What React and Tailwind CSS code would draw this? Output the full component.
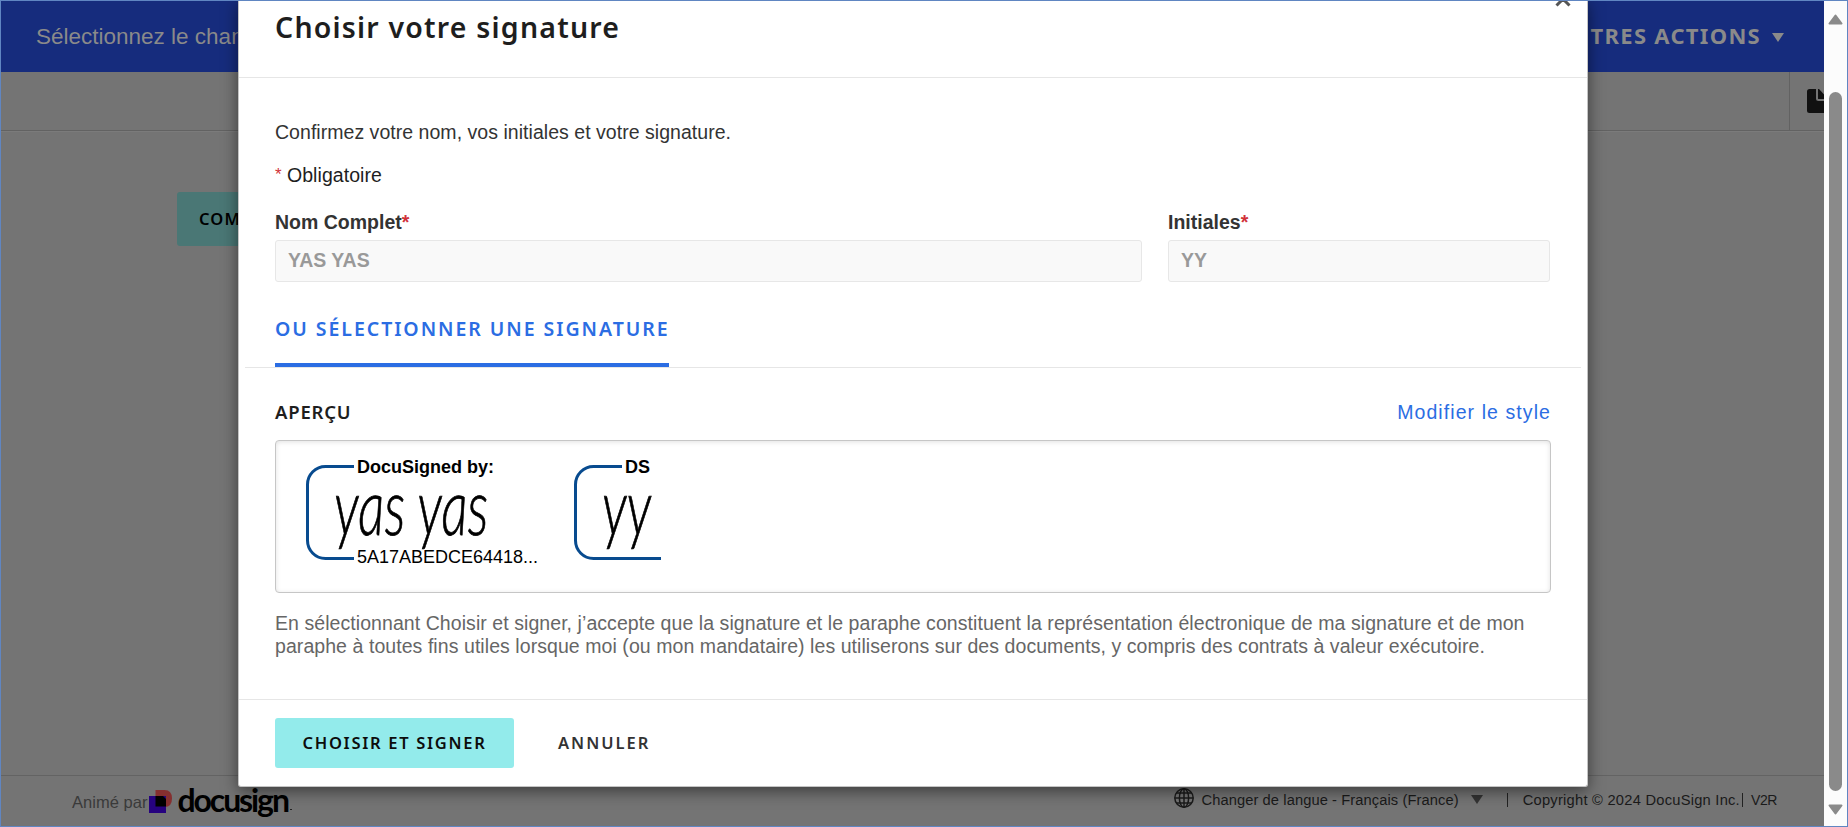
import React from "react";

const heading = "font-['Noto_Sans',sans-serif]";
const signature =
  "inline-block origin-left scale-x-[0.68] skew-x-2 whitespace-pre font-['Lato',sans-serif] text-[78px] leading-[80px] font-light italic text-black [-webkit-text-stroke:0.8px_black]";

function Caret({ className }) {
  return (
    <svg viewBox="0 0 12 9" className={className}>
      <path d="M0 0H12L6 9Z" fill="currentColor" />
    </svg>
  );
}

function PageHeader() {
  return (
    <header className="flex h-[71px] shrink-0 items-center justify-between bg-[#162c7d] pr-10 pb-px pl-[35px] text-[#8a8a8a]">
      <span className="mt-[2px] text-[22.5px] leading-[30px] whitespace-nowrap">Sélectionnez le champ</span>
      <div className="flex items-center gap-[11px]">
        <span className={`${heading} -mt-[2px] text-[22px] leading-[30px] font-bold tracking-[1.3px] whitespace-nowrap`}>
          AUTRES ACTIONS
        </span>
        <Caret className="mt-[3px] h-[9px] w-3" />
      </div>
    </header>
  );
}

function Toolbar() {
  return (
    <div className="flex h-[59px] shrink-0 justify-end border-b border-[#626262]">
      <div className="flex w-[35px] overflow-hidden border-l border-[#626262] pt-[17px] pl-[17px]">
        <svg viewBox="0 0 24 24" className="h-6 w-6 shrink-0">
          <rect width="24" height="24" rx="2.5" fill="#111" />
          <path d="M10 0V9.500Q10 11 11.500 11H24" fill="none" stroke="#747474" strokeWidth="2" />
          <path d="M12 0H24V10L21 10Z" fill="#747474" />
          <path d="M12.200 2V8.500H18.700Z" fill="#111" />
        </svg>
      </div>
    </div>
  );
}

function DocusignLogo() {
  return (
    <div className="flex items-center">
      <svg viewBox="0 0 23 23" className="mr-[5px] h-[23px] w-[23px]">
        <path d="M6.500 0H15.500Q23 0 23 8.500T15.500 17H6.500Z" fill="#852f2f" />
        <rect y="6" width="17" height="17" fill="#26027f" />
        <path d="M6.500 6H14L17 9V16.500H6.500Z" fill="#000" />
      </svg>
      <span className="-mt-[3px] font-['Lato',sans-serif] text-[32px] leading-[36px] font-bold tracking-[-2.1px] text-black">
        docusign
      </span>
      <span className="mt-4 ml-[2px] h-px w-[2px] bg-[#222]" />
    </div>
  );
}

function Globe() {
  return (
    <svg viewBox="0 0 20 20" className="h-5 w-5" fill="none" stroke="#1b1b1b" strokeWidth="1.5">
      <circle cx="10" cy="10" r="9.200" />
      <ellipse cx="10" cy="10" rx="4.600" ry="9.200" />
      <path d="M10 .8V19.200M.8 10H19.200M2.400 5H17.600M2.400 15H17.600" />
    </svg>
  );
}

function PageFooter() {
  return (
    <footer className="flex h-[51px] shrink-0 justify-between border-t border-[#636363] pr-[47px] pl-[71px] text-[#1a1a1a]">
      <div className="flex items-center">
        <span className="mt-[2px] mr-[2px] text-[16.5px] leading-5 tracking-[0.03px] text-[#3a3a3a]">Animé par</span>
        <DocusignLogo />
      </div>
      <div className="flex h-[44px] items-center text-[14.7px] leading-5 whitespace-nowrap">
        <Globe />
        <span className="mt-[3px] ml-[7px] tracking-[0.09px]">Changer de langue - Français (France)</span>
        <Caret className="mt-[3px] ml-[12px] h-[9px] w-3 text-[#333]" />
        <span className="mt-[4px] ml-[24px] h-[14px] w-px bg-[#222]" />
        <span className="mt-[3px] ml-[15px] tracking-[0.24px]">Copyright © 2024 DocuSign Inc.</span>
        <span className="mt-[4px] ml-[2px] h-[14px] w-px bg-[#222]" />
        <span className="mt-[3px] ml-[8px] text-[14px] tracking-[-0.4px]">V2R</span>
      </div>
    </footer>
  );
}

function Field({ label, value, width }) {
  return (
    <div className={`flex flex-col gap-[7px] ${width}`}>
      <label className="text-[19.5px] leading-[22px] font-bold text-[#333]">
        {label}
        <span className="text-[#d13239]">*</span>
      </label>
      <div className="flex h-[42px] items-center rounded-[3px] border border-[#e7e7e7] bg-[#f9f9f9] px-3 text-[19.5px] font-bold text-[#999]">
        {value}
      </div>
    </div>
  );
}

function Stamp({ bracket, width, title, text, code }) {
  return (
    <div className={`relative h-[110px] ${width}`}>
      <svg viewBox="0 0 96 96" className="absolute top-[7px] left-0 h-24 w-24" fill="none" stroke="#084b8f" strokeWidth="3">
        <path d={bracket} />
      </svg>
      <span className="absolute -top-px left-[51px] text-[18px] leading-5 font-bold whitespace-nowrap text-black">{title}</span>
      <span className="absolute top-[7px] left-[28px]">
        <span className={signature}>{text}</span>
      </span>
      <span className="absolute top-[89px] left-[51px] text-[18px] leading-5 whitespace-nowrap text-black">{code}</span>
    </div>
  );
}

function SignatureDialog() {
  return (
    <section className="absolute -top-px left-[237px] flex h-[787px] w-[1350px] flex-col rounded-b-[3px] border-x border-b border-[#c4c4c4] bg-white shadow-[0_4px_16px_rgba(0,0,0,0.5)]">
      <div className="relative h-[78px] shrink-0 overflow-hidden border-b border-[#e6e6e6] px-9 pt-[7px]">
        <h1 className={`${heading} text-[28.5px] leading-10 font-semibold tracking-[1.2px] text-[#1e1e1e]`}>
          Choisir votre signature
        </h1>
        <svg viewBox="0 0 16 16" className="absolute -top-[9px] right-4 h-4 w-4">
          <path d="M1.500 1.500L14.500 14.500M14.500 1.500L1.500 14.500" stroke="#555" strokeWidth="3" />
        </svg>
      </div>

      <div className="flex flex-col px-9">
        <p className="mt-[43px] text-[19.5px] leading-[22px] tracking-[0.035px] text-[#333]">
          Confirmez votre nom, vos initiales et votre signature.
        </p>
        <p className="mt-[21px] flex h-[22px] text-[19.5px] leading-[22px] text-[#1e1e1e]">
          <span className="w-3 text-[17px] text-[#d13239]">*</span>
          <span className="tracking-[0.05px]">Obligatoire</span>
        </p>
        <div className="mt-[25px] flex gap-[26px]">
          <Field label="Nom Complet" value="YAS YAS" width="w-[867px]" />
          <Field label="Initiales" value="YY" width="w-[382px]" />
        </div>
      </div>

      <div className="mx-1.5 mt-[35px] flex border-b border-[#e6e6e6] pl-[30px]">
        <div className={`${heading} w-[394px] border-b-4 border-[#2b6de3] pb-[22px] text-[19.5px] leading-6 font-semibold tracking-[1.95px] whitespace-nowrap text-[#2b6de3]`}>
          OU SÉLECTIONNER UNE SIGNATURE
        </div>
      </div>

      <div className="flex flex-col pr-[36px] pl-9">
        <div className="mt-8 flex justify-between leading-6">
          <h2 className={`${heading} text-[18.5px] font-semibold tracking-[0.8px] text-[#1e1e1e]`}>APERÇU</h2>
          <a className="text-[19.5px] tracking-[1.08px] text-[#2b6de3]">Modifier le style</a>
        </div>
        <div className="mt-4 flex h-[153px] w-[1276px] rounded-[4px] border border-[#c6c6c6] pt-[17px] pl-[30px] shadow-[inset_0_1px_5px_rgba(0,0,0,0.12)]">
          <Stamp
            width="w-[268px]"
            bracket="M48 1.500H19.500A18 18 0 0 0 1.500 19.500V75.500A18 18 0 0 0 19.500 93.500H48"
            title="DocuSigned by:"
            text="yas yas"
            code="5A17ABEDCE64418..."
          />
          <Stamp
            width="w-[96px]"
            bracket="M48 1.500H19.500A18 18 0 0 0 1.500 19.500V75.500A18 18 0 0 0 19.500 93.500H87"
            title="DS"
            text="yy"
          />
        </div>
        <p className="mt-[19px] text-[19.5px] leading-[23px] tracking-[0.065px] whitespace-nowrap text-[#666]">
          En sélectionnant Choisir et signer, j’accepte que la signature et le paraphe constituent la représentation électronique de ma signature et de mon
          <br />
          paraphe à toutes fins utiles lorsque moi (ou mon mandataire) les utiliserons sur des documents, y compris des contrats à valeur exécutoire.
        </p>
      </div>

      <div className={`${heading} mt-[41px] flex border-t border-[#e6e6e6] px-9 pt-[18px] text-[16.5px] leading-[50px] font-semibold`}>
        <button className="h-[50px] w-[239px] rounded-[3px] bg-[#93ebeb] tracking-[1.7px] text-[#0c0c0c]">CHOISIR ET SIGNER</button>
        <button className="ml-11 h-[50px] tracking-[2px] text-[#333]">ANNULER</button>
      </div>
    </section>
  );
}

function Scrollbar() {
  return (
    <div className="flex w-[23px] shrink-0 flex-col items-center bg-[#fcfcfc] pt-[13px] pb-[11px]">
      <svg viewBox="0 0 15 11" className="h-[11px] w-[15px]">
        <path d="M7.500 1.500L13.500 9.500H1.500Z" fill="#8a8a8a" stroke="#8a8a8a" strokeWidth="2" strokeLinejoin="round" />
      </svg>
      <div className="mt-[67px] h-[699px] w-[13px] rounded-full bg-[#8a8a8a]" />
      <svg viewBox="0 0 15 11" className="mt-auto h-[11px] w-[15px]">
        <path d="M7.500 9.500L13.500 1.500H1.500Z" fill="#8a8a8a" stroke="#8a8a8a" strokeWidth="2" strokeLinejoin="round" />
      </svg>
    </div>
  );
}

export default function App() {
  return (
    <div className="relative flex h-[827px] w-[1848px] overflow-hidden border border-[#6086c2] bg-[#747474] font-['Liberation_Sans',Arial,sans-serif]">
      <div className="relative flex min-w-0 flex-1 flex-col overflow-hidden">
        <PageHeader />
        <Toolbar />
        <main className="flex-1 border-t border-[#7b7b7b] pt-[60px] pl-[176px]">
          <button className={`${heading} h-[54px] w-[200px] rounded-[3px] bg-[#4a7775] pl-[22px] text-left text-[16.5px] font-semibold tracking-[1.1px] text-black`}>
            COM
          </button>
        </main>
        <PageFooter />
        <SignatureDialog />
      </div>
      <Scrollbar />
    </div>
  );
}
